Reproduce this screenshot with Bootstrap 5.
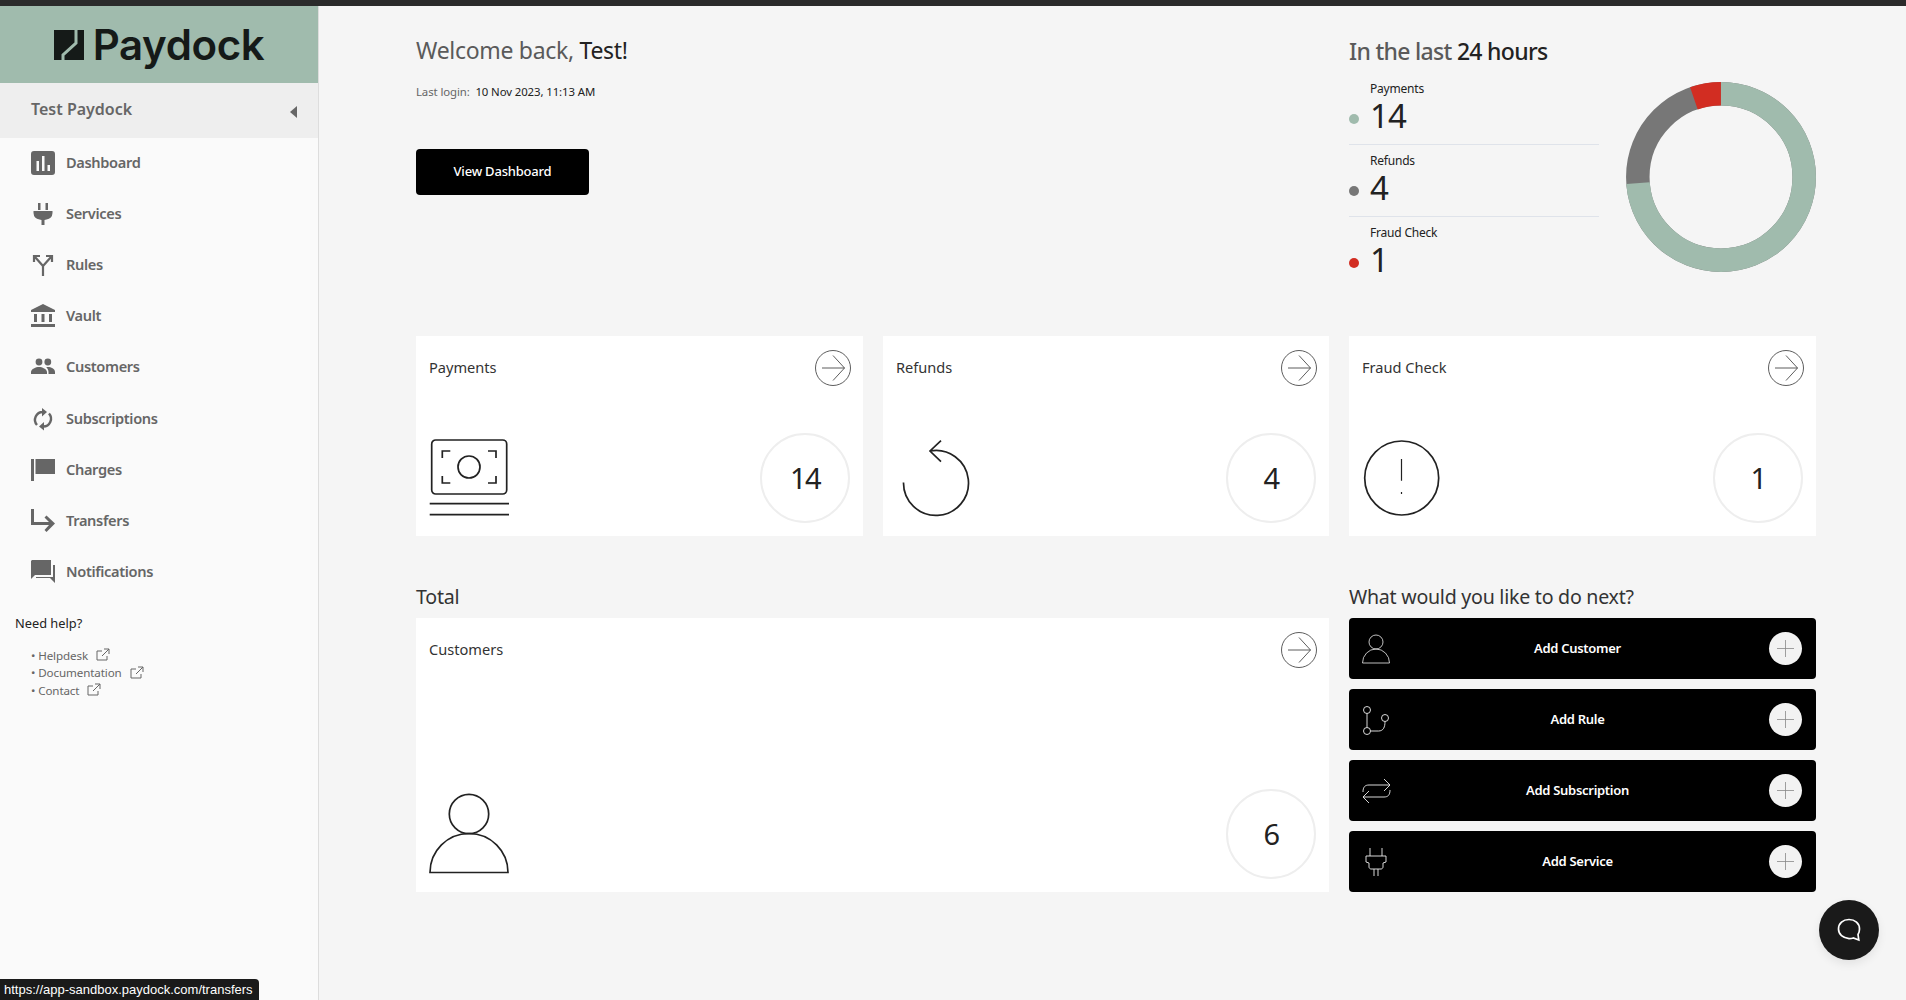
<!DOCTYPE html>
<html lang="en">
<head>
<meta charset="utf-8">
<title>Paydock</title>
<link href="https://cdn.jsdelivr.net/npm/bootstrap@5.3.0/dist/css/bootstrap.min.css" rel="stylesheet">
<style>
html,body{height:100%}
body{font-family:"Noto Sans","Open Sans",sans-serif;background:#f5f5f5;color:#222;overflow:hidden}
.pd-top{height:6px;background:#2b2b2b}
.pd-shell{height:994px}
.pd-side{width:319px;flex:none;background:#fafafa;border-right:1px solid #ddd}
.pd-logo{height:77px;background:#a0bbad;color:#151a18;gap:9px}
.pd-logo-text{font-family:"Inter",sans-serif;font-size:42px;font-weight:600;letter-spacing:-.4px;line-height:1}
.pd-org{height:55px;background:#eee;padding:0 21px 4px 31px;color:#666;font-weight:600;font-size:16px}
.pd-caret{width:0;height:0;border-style:solid;border-width:6.5px 7px 6.5px 0;border-color:transparent #666 transparent transparent;margin-top:6px}
.pd-nav{margin-top:-1px}
.pd-nav a{height:51.2px;padding-left:31px;color:#666;font-weight:600;font-size:14.6px;letter-spacing:-.35px;text-decoration:none;gap:11px}
.pd-nav svg{width:24px;height:24px;fill:#666;flex:none}
.pd-help{padding:16px 0 0 15px;font-size:12.8px;color:#222}
.pd-help-list{margin-top:15px;padding-left:16px;font-size:11.6px;line-height:16px;color:#666;letter-spacing:-.1px}
.pd-help-list svg{width:14px;height:14px;margin:0 0 3px 5px;stroke:#666;fill:none}
.pd-main{padding:0 90px 0 97px}
.pd-grid{display:grid;grid-template-columns:447px 446px 467px;column-gap:20px}
.pd-hero{height:330px}
.pd-welcome{font-size:23px;font-weight:400;color:#5a5a5a;margin:0;padding-top:28px;line-height:32px;letter-spacing:-.3px}
.pd-dark{color:#222}
.pd-login{font-size:11.4px;color:#666;margin-top:18px;line-height:16px;letter-spacing:-.1px}
.pd-view{display:block;width:173px;height:46px;margin-top:49px;background:#000;color:#fff;border:0;border-radius:4px;font-size:13px;font-weight:500;letter-spacing:-.2px}
.pd-view:hover{background:#000;color:#fff}
.pd-last{font-size:23px;color:#5a5a5a;margin:0;padding-top:29px;line-height:32px;letter-spacing:-.7px}
.pd-legend{width:250px;margin-top:6px}
.pd-row{height:72px;padding-top:1px;border-bottom:1px solid #dfe3ea}
.pd-row:last-child{border-bottom:0}
.pd-dot{width:10px;height:10px;border-radius:50%;flex:none;margin-top:40px;margin-right:11px}
.pd-row-lbl{font-size:12px;line-height:16px;padding-top:7px;letter-spacing:-.2px}
.pd-row-val{font-size:33px;line-height:38px;color:#222;letter-spacing:-1px}
.pd-c-green{background:#a0bbad}.pd-c-gray{background:#777}.pd-c-red{background:#d22d22}
.pd-donut{width:190px;height:190px;margin-top:15px}
.pd-cardbox{background:#fff;height:200px;padding:14px 12px 13px 13px}
.pd-cardtitle{font-size:14.6px;font-weight:400;margin:0;line-height:35px;color:#333}
.pd-arrow{width:36px;height:36px;flex:none}
.pd-ic{width:82px;height:82px;display:block}
.pd-num{width:90px;height:90px;border:2px solid #eee;border-radius:50%;font-size:29px;color:#222;margin-right:1px;letter-spacing:-1.5px}
.pd-bot{margin-top:41px}
.pd-h{font-size:19.6px;font-weight:400;margin:0;line-height:22px;height:41px;padding-top:9px;color:#333;letter-spacing:-.25px}
.pd-wide{grid-column:1 / span 2}
.pd-cust{height:274px}
.pd-btns{gap:10px}
.pd-add{height:61px;background:#000;color:#fff;border-radius:4px;padding:0 14px 0 12px;font-size:13px;font-weight:600;letter-spacing:-.3px;text-decoration:none}
.pd-add:hover{color:#fff}
.pd-add-lbl{flex:1;text-align:center;padding-right:5px}
.pd-add-ic{width:30px;height:30px;flex:none;stroke:#eee;fill:none}
.pd-plus{width:33px;height:33px;background:#f2f2f2;border-radius:50%;flex:none}
.pd-status{position:fixed;left:0;bottom:0;width:259px;height:21px;background:#1a1a1a;color:#fff;font-family:"Liberation Sans",sans-serif;font-size:13px;line-height:21px;padding-left:4px;border-top-right-radius:4px;white-space:nowrap}
.pd-chat{position:fixed;left:1819px;top:900px;width:60px;height:60px;border-radius:50%;background:#1a1a1a;box-shadow:0 4px 10px rgba(0,0,0,.08)}
</style>
</head>
<body>
<div class="pd-top"></div>
<div class="pd-shell d-flex">
  <aside class="pd-side">
    <div class="pd-logo d-flex align-items-center justify-content-center">
      <svg width="30" height="30" viewBox="0 0 30 30"><path fill="#151a18" d="M0 0h30v30H0Z"/><path fill="none" stroke="#a0bbad" stroke-width="3" d="M22 0v13L9 25v5"/></svg>
      <span class="pd-logo-text">Paydock</span>
    </div>
    <div class="pd-org d-flex align-items-center justify-content-between"><span>Test Paydock</span><span class="pd-caret"></span></div>
    <nav class="pd-nav d-flex flex-column">
      <a href="#" class="d-flex align-items-center"><svg viewBox="0 0 24 24"><path d="M3 0h18a3 3 0 0 1 3 3v18a3 3 0 0 1-3 3H3a3 3 0 0 1-3-3V3a3 3 0 0 1 3-3Zm2.500 10v10h2.500V10Zm5.500-5v15h2.500V5Zm5.500 9v6h2.500v-6Z" fill-rule="evenodd"/></svg>Dashboard</a>
      <a href="#" class="d-flex align-items-center"><svg viewBox="0 0 24 24"><path d="M7 1h2.500v7H7ZM14.500 1H17v7h-2.500ZM2.500 9h19v2a7 7 0 0 1-6 6.500L13.500 18v5h-3v-5L8.500 17.500a7 7 0 0 1-6-6.500Z"/></svg>Services</a>
      <a href="#" class="d-flex align-items-center"><svg viewBox="0 0 24 24"><path fill="none" stroke="#666" stroke-width="2.200" d="M12 23V13L4 4M20 4l-8 9M3 9V3h6M15 3h6v6"/></svg>Rules</a>
      <a href="#" class="d-flex align-items-center"><svg viewBox="0 0 24 24"><path d="M12 0 24 6v2H0V6ZM3 10h3v8H3ZM10.500 10h3v8h-3ZM18 10h3v8h-3ZM0 20h24v3H0Z"/></svg>Vault</a>
      <a href="#" class="d-flex align-items-center"><svg viewBox="0 0 24 24"><circle cx="8" cy="7" r="3.400"/><circle cx="16.800" cy="7" r="3.400"/><path d="M0 19v-2c0-3 5-5 8-5s8 2 8 5v2ZM17.500 19v-2c0-1.800-.8-3.500-2.300-4.700 3-.8 8.800.8 8.800 4.700v2Z"/></svg>Customers</a>
      <a href="#" class="d-flex align-items-center"><svg viewBox="0 0 24 24"><path fill="none" stroke="#666" stroke-width="2.400" d="M11 5h1a7.800 7.800 0 0 0-6 13M13 19.500h-1a7.800 7.800 0 0 0 6-13"/><path d="M11 1l5 4-5 4.500ZM13 15l-5 4.500 5 4Z"/></svg>Subscriptions</a>
      <a href="#" class="d-flex align-items-center"><svg viewBox="0 0 24 24"><path d="M0 1h3v22H0ZM4.500 1H24v15H4.500Z"/></svg>Charges</a>
      <a href="#" class="d-flex align-items-center"><svg viewBox="0 0 24 24"><path d="M0 0h3v13h15l-4.500-4.500 2-2L24 14.500 15.500 23l-2-2 4.500-5H0Z"/></svg>Transfers</a>
      <a href="#" class="d-flex align-items-center"><svg viewBox="0 0 24 24"><path d="M1 0h19v15H4l-4 4V1ZM22 5h2v18l-5-5H5v-1h17Z"/></svg>Notifications</a>
    </nav>
    <div class="pd-help">Need help?
      <div class="pd-help-list">
        <div>• Helpdesk <svg viewBox="0 0 14 14"><path d="M11 8v4H1V3h5M8 1h5v5M13 1 6 8"/></svg></div>
        <div>• Documentation <svg viewBox="0 0 14 14"><path d="M11 8v4H1V3h5M8 1h5v5M13 1 6 8"/></svg></div>
        <div>• Contact <svg viewBox="0 0 14 14"><path d="M11 8v4H1V3h5M8 1h5v5M13 1 6 8"/></svg></div>
      </div>
    </div>
  </aside>
  <main class="pd-main flex-grow-1">
    <div class="pd-grid pd-hero">
      <div class="pd-wide">
        <h1 class="pd-welcome">Welcome back, <span class="pd-dark">Test!</span></h1>
        <div class="pd-login">Last login:&nbsp; <span class="pd-dark">10 Nov 2023, 11:13 AM</span></div>
        <button type="button" class="btn pd-view">View Dashboard</button>
      </div>
      <div>
        <h2 class="pd-last">In the last <span class="pd-dark">24 hours</span></h2>
        <div class="d-flex justify-content-between">
          <div class="pd-legend">
            <div class="pd-row d-flex"><span class="pd-dot pd-c-green"></span><div><div class="pd-row-lbl">Payments</div><div class="pd-row-val">14</div></div></div>
            <div class="pd-row d-flex"><span class="pd-dot pd-c-gray"></span><div><div class="pd-row-lbl">Refunds</div><div class="pd-row-val">4</div></div></div>
            <div class="pd-row d-flex"><span class="pd-dot pd-c-red"></span><div><div class="pd-row-lbl">Fraud Check</div><div class="pd-row-val">1</div></div></div>
          </div>
          <svg class="pd-donut" viewBox="0 0 190 190" fill="none" stroke-width="23.500">
            <circle cx="95" cy="95" r="83.200" stroke="#777" transform="rotate(-90 95 95)"/>
            <circle cx="95" cy="95" r="83.200" stroke="#d22d22" stroke-dasharray="27.500 495.300" transform="rotate(-109 95 95)"/>
            <circle cx="95" cy="95" r="83.200" stroke="#a0bbad" stroke-dasharray="385.200 137.600" transform="rotate(-90 95 95)"/>
          </svg>
        </div>
      </div>
    </div>
    <div class="pd-grid">
      <div class="pd-cardbox d-flex flex-column justify-content-between">
        <div class="d-flex justify-content-between"><div class="pd-cardtitle">Payments</div><svg class="pd-arrow" viewBox="0 0 36 36" fill="none" stroke="#333" stroke-width=".8"><circle cx="18" cy="18" r="17.500"/><path d="M7 18h22.500M18 5.500 29.500 18 18 30.500"/></svg></div>
        <div class="d-flex justify-content-between align-items-center">
          <svg class="pd-ic" viewBox="0 0 82 82" fill="none" stroke="#222" stroke-width="1.700"><rect x="2.700" y="3" width="75" height="54" rx="4"/><circle cx="40" cy="30" r="11"/><path d="M13.300 21v-7h8M59 14h8v7M13.300 39v7h8M59 46h8v-7M.7 66.700h79.300M.7 77.700h79.300"/></svg>
          <div class="pd-num d-flex align-items-center justify-content-center">14</div>
        </div>
      </div>
      <div class="pd-cardbox d-flex flex-column justify-content-between">
        <div class="d-flex justify-content-between"><div class="pd-cardtitle">Refunds</div><svg class="pd-arrow" viewBox="0 0 36 36" fill="none" stroke="#333" stroke-width=".8"><circle cx="18" cy="18" r="17.500"/><path d="M7 18h22.500M18 5.500 29.500 18 18 30.500"/></svg></div>
        <div class="d-flex justify-content-between align-items-center">
          <svg class="pd-ic" viewBox="0 0 82 82" fill="none" stroke="#222" stroke-width="1.700"><path d="M34 14A32.500 32.500 0 1 1 7.500 45.500M45 3.700 34 14l11 10.700"/></svg>
          <div class="pd-num d-flex align-items-center justify-content-center">4</div>
        </div>
      </div>
      <div class="pd-cardbox d-flex flex-column justify-content-between">
        <div class="d-flex justify-content-between"><div class="pd-cardtitle">Fraud Check</div><svg class="pd-arrow" viewBox="0 0 36 36" fill="none" stroke="#333" stroke-width=".8"><circle cx="18" cy="18" r="17.500"/><path d="M7 18h22.500M18 5.500 29.500 18 18 30.500"/></svg></div>
        <div class="d-flex justify-content-between align-items-center">
          <svg class="pd-ic" viewBox="0 0 82 82" fill="none" stroke="#222" stroke-width="1.700"><circle cx="39.700" cy="41" r="37"/><path stroke-width="1.200" d="M39.500 22v21.700M39.500 55v2"/></svg>
          <div class="pd-num d-flex align-items-center justify-content-center">1</div>
        </div>
      </div>
    </div>
    <div class="pd-grid pd-bot">
      <div class="pd-wide">
        <h2 class="pd-h">Total</h2>
        <div class="pd-cardbox pd-cust d-flex flex-column justify-content-between">
          <div class="d-flex justify-content-between"><div class="pd-cardtitle">Customers</div><svg class="pd-arrow" viewBox="0 0 36 36" fill="none" stroke="#333" stroke-width=".8"><circle cx="18" cy="18" r="17.500"/><path d="M7 18h22.500M18 5.500 29.500 18 18 30.500"/></svg></div>
          <div class="d-flex justify-content-between align-items-center">
            <svg class="pd-ic" viewBox="0 0 82 82" fill="none" stroke="#222" stroke-width="1.700"><circle cx="40" cy="21" r="19.700"/><path d="M1 79.500a39 39 0 0 1 78 0Z"/></svg>
            <div class="pd-num d-flex align-items-center justify-content-center">6</div>
          </div>
        </div>
      </div>
      <div>
        <h2 class="pd-h">What would you like to do next?</h2>
        <div class="pd-btns d-flex flex-column">
          <a href="#" class="pd-add d-flex align-items-center"><svg class="pd-add-ic" viewBox="0 0 30 30" stroke-width=".8"><circle cx="15" cy="8" r="7"/><path d="M1.500 29a13.500 14 0 0 1 27 0Z"/></svg><span class="pd-add-lbl">Add Customer</span><svg class="pd-plus" viewBox="0 0 33 33" stroke="#888" stroke-width=".8"><path d="M16.500 8v17M8 16.500h17"/></svg></a>
          <a href="#" class="pd-add d-flex align-items-center"><svg class="pd-add-ic" viewBox="0 0 30 30" stroke-width=".9"><circle cx="6" cy="5" r="3.500"/><circle cx="6" cy="26" r="3.500"/><circle cx="24" cy="13" r="3.500"/><path d="M6 8.500V22.500M9.500 26h8c5 0 6.500-4 6.500-9.500"/></svg><span class="pd-add-lbl">Add Rule</span><svg class="pd-plus" viewBox="0 0 33 33" stroke="#888" stroke-width=".8"><path d="M16.500 8v17M8 16.500h17"/></svg></a>
          <a href="#" class="pd-add d-flex align-items-center"><svg class="pd-add-ic" viewBox="0 0 30 30" stroke-width=".9"><path d="M2 16c0-5 2-7 6-7h21M23 3l6 6-6 6M29 14c0 5-2 7-6 7H2M8 15l-6 6 6 6"/></svg><span class="pd-add-lbl">Add Subscription</span><svg class="pd-plus" viewBox="0 0 33 33" stroke="#888" stroke-width=".8"><path d="M16.500 8v17M8 16.500h17"/></svg></a>
          <a href="#" class="pd-add d-flex align-items-center"><svg class="pd-add-ic" viewBox="0 0 30 30" stroke-width=".9"><path d="M9 1v8M21 1v8M5 9h20v6l-3 1v4c0 1-1 2-2 2H10c-1 0-2-1-2-2v-4l-3-1ZM13 22v7M17 22v7"/></svg><span class="pd-add-lbl">Add Service</span><svg class="pd-plus" viewBox="0 0 33 33" stroke="#888" stroke-width=".8"><path d="M16.500 8v17M8 16.500h17"/></svg></a>
        </div>
      </div>
    </div>
  </main>
</div>
<div class="pd-status">https://app-sandbox.paydock.com/transfers</div>
<div class="pd-chat d-flex align-items-center justify-content-center"><svg width="24" height="24" viewBox="0 0 24 24" fill="none" stroke="#fff" stroke-width="1.700"><path d="M12 1.500c6 0 10.500 4 10.500 9.500 0 2.500-.5 4-1.500 5.500l.8 5.500-5.500-2c-1.300.4-2.800.6-4.300.6C6 20.100 1.500 16.500 1.500 11S6 1.500 12 1.500Z"/></svg></div>
<script src="https://cdn.jsdelivr.net/npm/bootstrap@5.3.0/dist/js/bootstrap.bundle.min.js"></script>
</body>
</html>
